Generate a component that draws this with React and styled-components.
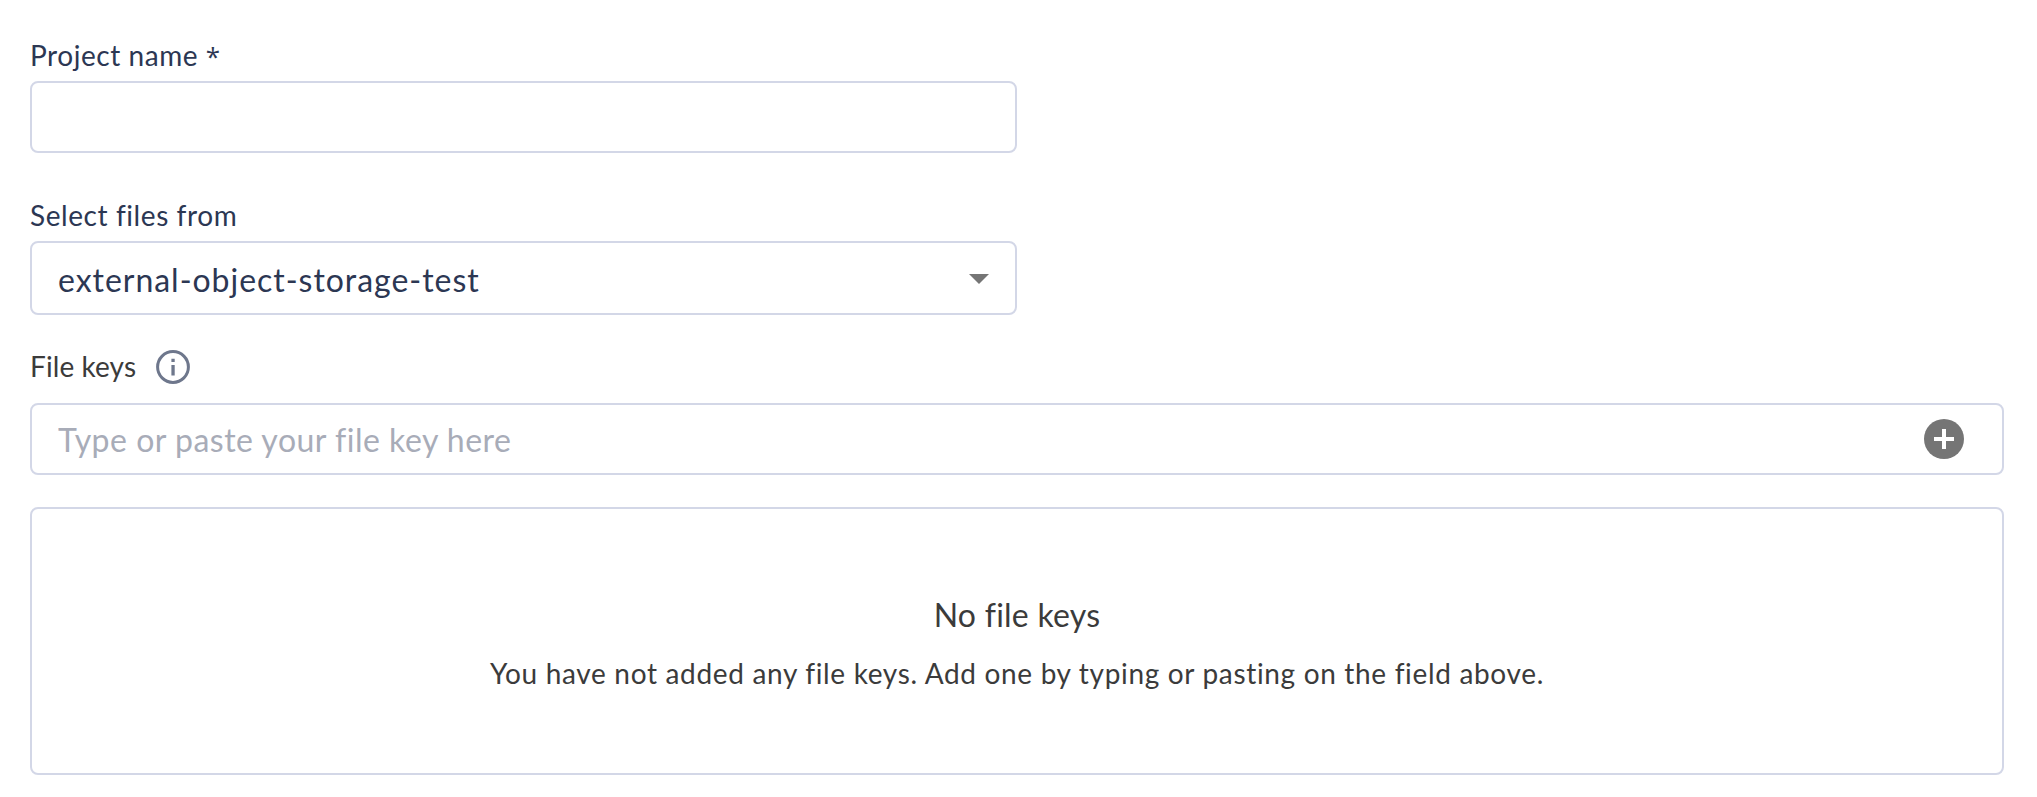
import React from "react";
import styled, { createGlobalStyle } from "styled-components";

const GlobalStyle = createGlobalStyle`
  *, *::before, *::after { box-sizing: border-box; }
  body { margin: 0; background: #fff; font-family: Lato, "Open Sans", sans-serif; font-variant-ligatures: none; }
`;

const Form = styled.form`
  display: flex;
  flex-direction: column;
  padding: 39px 33px 22px 30px;
`;

const Field = styled.div`
  display: flex;
  flex-direction: column;
  gap: 10px;
  width: 987px;
  margin-bottom: ${(p) => p.$below}px;
`;

const Label = styled.label`
  font-size: 28px;
  line-height: 32px;
  letter-spacing: ${(p) => p.$tracking}px;
  color: ${(p) => p.$color || "#2c3753"};
  white-space: nowrap;
`;

const Required = styled.span`
  font-family: "Open Sans", sans-serif;
  font-size: 26px;
  line-height: 1;
`;

const Frame = styled.div`
  display: flex;
  align-items: center;
  justify-content: space-between;
  height: ${(p) => p.$height || 72}px;
  border: 2px solid #d3d7e7;
  border-radius: 8px;
  padding: 0 ${(p) => p.$right || 26}px 0 26px;
  background: #fff;
`;

const Input = styled.input`
  flex: 1;
  min-width: 0;
  height: 40px;
  margin: 0;
  border: 0;
  outline: 0;
  padding: 0;
  background: transparent;
  font: 32px/36px Lato, sans-serif;
  letter-spacing: 0.5px;
  color: #2c3753;
  &::placeholder { color: #a8acb8; opacity: 1; }
`;

const Value = styled.span`
  padding-top: 4px;
  font-size: 32px;
  line-height: 36px;
  letter-spacing: 0.97px;
  color: #2c3753;
`;

const KeysHeader = styled.div`
  display: flex;
  align-items: center;
  gap: 20px;
  height: 34px;
  margin-bottom: 19px;

  ${Label} {
    padding-bottom: 2px;
  }
`;

const Icon = styled.svg`
  display: block;
  flex: none;
  margin-top: ${(p) => p.$drop || 0}px;
`;

const EmptyState = styled.section`
  display: flex;
  flex-direction: column;
  align-items: center;
  gap: 24px;
  height: 268px;
  margin-top: 32px;
  padding-top: 88px;
  border: 2px solid #d3d7e7;
  border-radius: 8px;
  color: #3b3b3b;
`;

const EmptyTitle = styled.h2`
  margin: 0;
  font-size: 32px;
  font-weight: 400;
  line-height: 36px;
  letter-spacing: 0.25px;
`;

const EmptyText = styled.p`
  margin: 0;
  font-size: 28px;
  line-height: 32px;
  letter-spacing: 0.67px;
  white-space: nowrap;
`;

export default function App() {
  return (
    <>
      <GlobalStyle />
      <Form>
        <Field $below={46}>
          <Label htmlFor="name" $tracking={0.55}>
            Project name <Required>*</Required>
          </Label>
          <Frame>
            <Input id="name" />
          </Frame>
        </Field>
        <Field $below={35}>
          <Label $tracking={0.58}>Select files from</Label>
          <Frame $height={74}>
            <Value>external-object-storage-test</Value>
            <Icon $drop={2} width="20" height="10" viewBox="0 0 20 10">
              <path d="M0 0h20L10 10z" fill="#757575" />
            </Icon>
          </Frame>
        </Field>
        <KeysHeader>
          <Label htmlFor="key" $tracking={0.1} $color="#3b3b3b">File keys</Label>
          <Icon width="34" height="34" viewBox="0 0 34 34">
            <circle cx="17" cy="17" r="15.4" fill="none" stroke="#6e778c" strokeWidth="3" />
            <path d="M15.4 8.8h3.3v3.2h-3.3zM15.4 15h3.3v10.4h-3.3z" fill="#6e778c" />
          </Icon>
        </KeysHeader>
        <Frame $right={38}>
          <Input id="key" placeholder="Type or paste your file key here" />
          <Icon width="40" height="40" viewBox="0 0 40 40">
            <circle cx="20" cy="20" r="20" fill="#757575" />
            <path d="M18 10h4v8h8v4h-8v8h-4v-8h-8v-4h8z" fill="#fff" />
          </Icon>
        </Frame>
        <EmptyState>
          <EmptyTitle>No file keys</EmptyTitle>
          <EmptyText>
            You have not added any file keys. Add one by typing or pasting on the field above.
          </EmptyText>
        </EmptyState>
      </Form>
    </>
  );
}
